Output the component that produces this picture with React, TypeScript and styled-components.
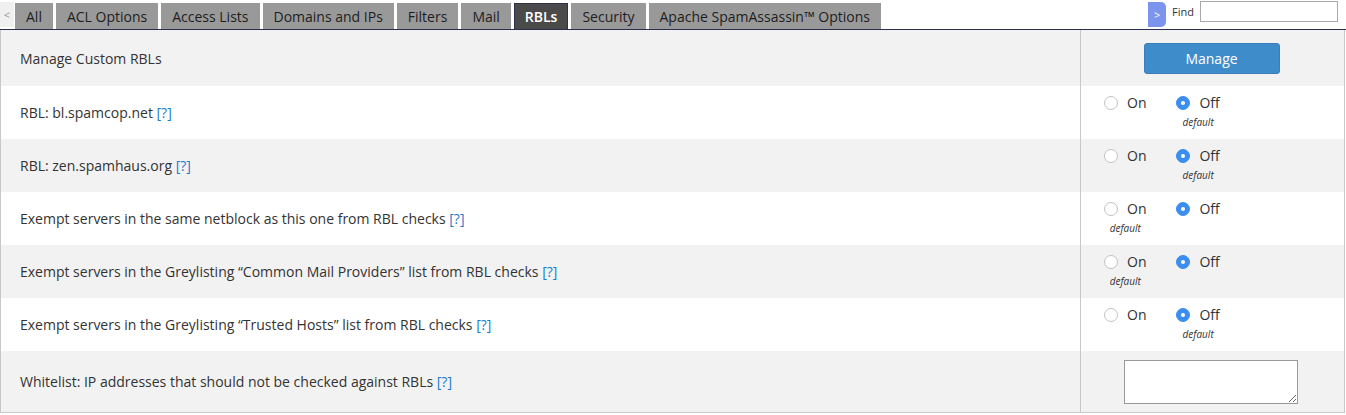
import { useState } from 'react';
import styled, { createGlobalStyle } from 'styled-components';

const GlobalStyle = createGlobalStyle`
  body {
    margin: 0;
    background: #fff;
    font-family: "Open Sans", "Liberation Sans", sans-serif;
    font-size: 14px;
    color: #333;
  }
`;

const tabs = [
  'All',
  'ACL Options',
  'Access Lists',
  'Domains and IPs',
  'Filters',
  'Mail',
  'RBLs',
  'Security',
  'Apache SpamAssassin™ Options',
];

interface Setting {
  label: string;
  kind: 'button' | 'radio' | 'text';
  help?: boolean;
  value?: 'on' | 'off';
  defaultValue?: 'on' | 'off';
}

const settings: Setting[] = [
  { label: 'Manage Custom RBLs', kind: 'button' },
  { label: 'RBL: bl.spamcop.net', kind: 'radio', help: true, value: 'off', defaultValue: 'off' },
  { label: 'RBL: zen.spamhaus.org', kind: 'radio', help: true, value: 'off', defaultValue: 'off' },
  {
    label: 'Exempt servers in the same netblock as this one from RBL checks',
    kind: 'radio',
    help: true,
    value: 'off',
    defaultValue: 'on',
  },
  {
    label: 'Exempt servers in the Greylisting “Common Mail Providers” list from RBL checks',
    kind: 'radio',
    help: true,
    value: 'off',
    defaultValue: 'on',
  },
  {
    label: 'Exempt servers in the Greylisting “Trusted Hosts” list from RBL checks',
    kind: 'radio',
    help: true,
    value: 'off',
    defaultValue: 'off',
  },
  { label: 'Whitelist: IP addresses that should not be checked against RBLs', kind: 'text', help: true },
];

const App = () => {
  const [active, setActive] = useState('RBLs');
  const [values, setValues] = useState(settings.map((s) => s.value));

  return (
    <>
      <GlobalStyle />
      <TabBar>
        <ScrollLeft>&lt;</ScrollLeft>
        <Tabs>
          {tabs.map((t) => (
            <Tab key={t} $active={t === active} onClick={() => setActive(t)}>
              {t}
            </Tab>
          ))}
        </Tabs>
        <FindBox>
          <ScrollRight>&gt;</ScrollRight>
          <FindLabel>Find</FindLabel>
          <FindInput type="text" />
        </FindBox>
      </TabBar>
      <SettingsTable>
        {settings.map((s, i) => (
          <Row key={s.label} $striped={i % 2 === 0} $kind={s.kind}>
            <LabelCell>
              {s.label}
              {s.help && <Help href="#"> [?]</Help>}
            </LabelCell>
            <ValueCell $kind={s.kind}>
              {s.kind === 'button' && <ManageButton>Manage</ManageButton>}
              {s.kind === 'text' && <Whitelist />}
              {s.kind === 'radio' && (
                <RadioGroup>
                  {(['on', 'off'] as const).map((opt) => (
                    <Option key={opt}>
                      <OptionLine
                        onClick={() =>
                          setValues((v) => v.map((x, j) => (j === i ? opt : x)))
                        }
                      >
                        <Radio $checked={values[i] === opt} />
                        {opt === 'on' ? 'On' : 'Off'}
                      </OptionLine>
                      {s.defaultValue === opt && <DefaultNote>default</DefaultNote>}
                    </Option>
                  ))}
                </RadioGroup>
              )}
            </ValueCell>
          </Row>
        ))}
      </SettingsTable>
    </>
  );
};

export default App;

const TabBar = styled.div`
  display: flex;
  align-items: flex-end;
  height: 29px;
  border-bottom: 1px solid #2b2e4c;
`;

const ScrollLeft = styled.div`
  width: 14px;
  height: 25px;
  margin-bottom: 2px;
  background: #f0f0f0;
  color: #999;
  font-size: 11px;
  display: flex;
  align-items: center;
  justify-content: center;
`;

const Tabs = styled.div`
  display: flex;
  gap: 3px;
  margin-left: 1px;
`;

const Tab = styled.div<{ $active?: boolean }>`
  height: 26px;
  box-sizing: border-box;
  padding: 0 10px;
  display: flex;
  align-items: center;
  background: ${(p) => (p.$active ? '#4a4a4a' : '#999')};
  color: ${(p) => (p.$active ? '#fff' : '#1e1e1e')};
  font-weight: ${(p) => (p.$active ? 600 : 400)};
  border: 1px solid ${(p) => (p.$active ? '#2e3147' : '#999')};
  border-bottom: none;
  white-space: nowrap;
  cursor: pointer;
`;

const FindBox = styled.div`
  margin-left: auto;
  align-self: stretch;
  display: flex;
  align-items: flex-start;
  padding-top: 1px;
  padding-right: 8px;
`;

const ScrollRight = styled.div`
  width: 18px;
  height: 25px;
  margin-top: 1px;
  background: #7b95ee;
  color: #fff;
  font-size: 11px;
  border-radius: 0 5px 5px 0;
  display: flex;
  align-items: center;
  justify-content: center;
`;

const FindLabel = styled.span`
  margin: 3px 6px 0 6px;
  font-size: 11px;
  color: #333;
`;

const FindInput = styled.input`
  width: 138px;
  height: 21px;
  box-sizing: border-box;
  border: 1px solid #aaa;
  padding: 2px 4px;
  outline: none;
`;

const SettingsTable = styled.div`
  border: 1px solid #c8c8c8;
  border-top: none;
  margin-right: 1px;
`;

const rowHeights = { button: 56, radio: 53, text: 61 };

const Row = styled.div<{ $striped: boolean; $kind: Setting['kind'] }>`
  display: grid;
  grid-template-columns: 1079px 1fr;
  height: ${(p) => rowHeights[p.$kind]}px;
  background: ${(p) => (p.$striped ? '#f2f2f2' : '#fff')};
`;

const LabelCell = styled.div`
  display: flex;
  align-items: center;
  padding-left: 19px;
  white-space: pre;
`;

const Help = styled.a`
  color: #1a7ccc;
  text-decoration: none;
`;

const ValueCell = styled.div<{ $kind: Setting['kind'] }>`
  border-left: 1px solid #c8c8c8;
  display: flex;
  justify-content: ${(p) => (p.$kind === 'radio' ? 'flex-start' : 'center')};
  align-items: ${(p) => (p.$kind === 'radio' ? 'flex-start' : 'center')};
  padding-top: ${(p) => (p.$kind === 'radio' ? '7px' : '0')};
  padding-left: ${(p) => (p.$kind === 'radio' ? '23px' : '0')};
`;

const ManageButton = styled.button`
  width: 136px;
  height: 31px;
  margin-top: 1px;
  margin-right: 2px;
  background: #3f8ccb;
  border: 1px solid #3a7fb9;
  border-radius: 3px;
  color: #fff;
  font-family: "Open Sans", "Liberation Sans", sans-serif;
  font-size: 14px;
  cursor: pointer;
`;

const Whitelist = styled.textarea`
  width: 174px;
  height: 44px;
  box-sizing: border-box;
  margin-top: 1px;
  margin-right: 3px;
  border: 1px solid #999;
  resize: both;
`;

const RadioGroup = styled.div`
  display: flex;
  gap: 30px;
`;

const Option = styled.div`
  display: flex;
  flex-direction: column;
  align-items: center;
`;

const OptionLine = styled.label`
  display: flex;
  align-items: center;
  gap: 9px;
  line-height: 20px;
  cursor: pointer;
`;

const Radio = styled.span<{ $checked: boolean }>`
  width: 14px;
  height: 14px;
  box-sizing: border-box;
  border-radius: 50%;
  border: 1px solid ${(p) => (p.$checked ? '#3b8ef0' : '#c2c2c2')};
  background: ${(p) => (p.$checked ? '#3b8ef0' : '#fff')};
  display: flex;
  align-items: center;
  justify-content: center;
  &::after {
    content: '';
    width: 4px;
    height: 4px;
    border-radius: 50%;
    background: #fff;
    display: ${(p) => (p.$checked ? 'block' : 'none')};
  }
`;

const DefaultNote = styled.div`
  margin-top: 2px;
  font-size: 10px;
  font-style: italic;
  line-height: 14px;
  color: #333;
`;
